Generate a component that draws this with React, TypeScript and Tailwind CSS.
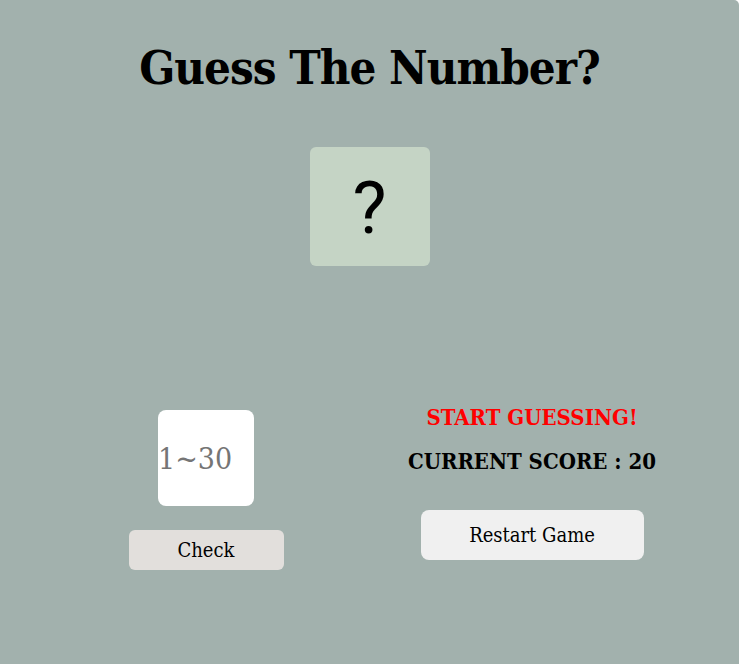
import React from "react";

const slab = { fontFamily: '"Roboto Slab", "DejaVu Serif Condensed", "DejaVu Serif", serif', fontStretch: "condensed" as const };

export default function App() {
  return (
    <div className="bg-white w-[739px] h-[664px]">
      <div
        className="w-[739px] h-[664px] bg-[#a2b1ad] rounded-tr-[5px] flex flex-col items-center"
        style={slab}
      >
        <h1 className="mt-[38px] text-[47px] leading-[60px] tracking-[-1px] font-bold text-black">
          Guess The Number?
        </h1>
        <div className="mt-[49px] w-[120px] h-[119px] rounded-[6px] bg-[#c5d4c5] flex items-center justify-center">
          <span
            className="mt-[4px] text-[72px] leading-none text-black"
            style={{ fontFamily: "Roboto, sans-serif", fontStretch: "normal" }}
          >
            ?
          </span>
        </div>
        <div className="mt-[144px] w-full flex items-start">
          <div className="ml-[50px] w-[312px] flex flex-col items-center">
            <input
              className="w-[96px] h-[96px] bg-white rounded-[8px] text-[30px] text-black placeholder:text-[#757575] px-0 outline-none"
              placeholder="1~30"
              style={slab}
            />
            <button className="mt-[24px] w-[155px] h-[40px] rounded-[6px] bg-[#e2dfdc] text-[20px] text-black">
              Check
            </button>
          </div>
          <div className="ml-[38px] w-[264px] flex flex-col items-center">
            <p className="mt-[-8px] text-[22px] leading-[30px] font-bold text-[#ff0000] whitespace-nowrap">
              START GUESSING!
            </p>
            <p className="mt-[14px] text-[22px] leading-[30px] font-bold text-black whitespace-nowrap">
              CURRENT SCORE : 20
            </p>
            <button className="mt-[34px] w-[223px] h-[50px] rounded-[8px] bg-[#f0f0f0] text-[20px] text-black">
              Restart Game
            </button>
          </div>
        </div>
      </div>
    </div>
  );
}
